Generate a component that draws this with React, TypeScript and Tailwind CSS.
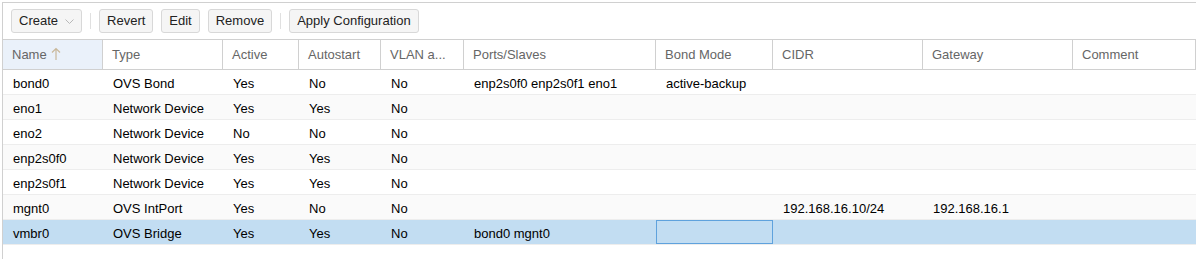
import React from 'react'

const cols = [
  { key: 'name', label: 'Name', w: 'w-[100px]' },
  { key: 'type', label: 'Type', w: 'w-[120px]' },
  { key: 'active', label: 'Active', w: 'w-[76px]' },
  { key: 'autostart', label: 'Autostart', w: 'w-[82px]' },
  { key: 'vlan', label: 'VLAN a...', w: 'w-[83px]' },
  { key: 'ports', label: 'Ports/Slaves', w: 'w-[192px]' },
  { key: 'bond', label: 'Bond Mode', w: 'w-[117px]' },
  { key: 'cidr', label: 'CIDR', w: 'w-[150px]' },
  { key: 'gw', label: 'Gateway', w: 'w-[150px]' },
  { key: 'comment', label: 'Comment', w: 'flex-1' },
]

const rows = [
  ['bond0', 'OVS Bond', 'Yes', 'No', 'No', 'enp2s0f0 enp2s0f1 eno1', 'active-backup', '', '', ''],
  ['eno1', 'Network Device', 'Yes', 'Yes', 'No', '', '', '', '', ''],
  ['eno2', 'Network Device', 'No', 'No', 'No', '', '', '', '', ''],
  ['enp2s0f0', 'Network Device', 'Yes', 'Yes', 'No', '', '', '', '', ''],
  ['enp2s0f1', 'Network Device', 'Yes', 'Yes', 'No', '', '', '', '', ''],
  ['mgnt0', 'OVS IntPort', 'Yes', 'No', 'No', '', '', '192.168.16.10/24', '192.168.16.1', ''],
  ['vmbr0', 'OVS Bridge', 'Yes', 'Yes', 'No', 'bond0 mgnt0', '', '', '', ''],
]

function Btn({ children }: { children: React.ReactNode }) {
  return (
    <button className="h-[24px] px-[7px] flex items-center gap-[6px] bg-[#f5f5f5] border border-[#d8d8d8] rounded-[3px] text-[13px] text-[#222]">
      {children}
    </button>
  )
}

export default function App() {
  return (
    <div className="w-[1196px] h-[259px] bg-white pt-[2px] pl-[2px] font-['Liberation_Sans',Arial,sans-serif] overflow-hidden">
      <div className="border-l border-t border-[#d0d0d0] h-full">
        {/* toolbar */}
        <div className="h-[36px] flex items-start pt-[6px] pl-[8px]">
          <Btn>
            Create
            <svg width="9" height="6" viewBox="0 0 9 6" className="mt-[1px] ml-[1px]">
              <path d="M0.5 0.5 L4.5 4.5 L8.5 0.5" fill="none" stroke="#b8b8b8" strokeWidth="1" />
            </svg>
          </Btn>
          <div className="w-px h-[16px] bg-[#e0e0e0] mx-[8px] mt-[4px]" />
          <div className="flex gap-[8px]">
            <Btn>Revert</Btn>
            <Btn>Edit</Btn>
            <Btn>Remove</Btn>
          </div>
          <div className="w-px h-[16px] bg-[#e0e0e0] mx-[8px] mt-[4px]" />
          <Btn>Apply Configuration</Btn>
        </div>

        {/* header */}
        <div className="flex h-[31px] border-t border-b border-[#d0d0d0] text-[13px] text-[#666]">
          {cols.map((c, i) => (
            <div
              key={c.key}
              className={`${c.w} shrink-0 flex items-center pl-[9px] border-r border-[#d0d0d0] ${i === 0 ? 'bg-[#eaf1fa]' : ''}`}
            >
              {c.label}
              {i === 0 && (
                <svg width="10" height="14" viewBox="0 0 10 14" className="ml-[4px] mt-[-1px]">
                  <path d="M5 13 L5 1.5 M1 5.5 L5 1.5 L9 5.5" fill="none" stroke="#c9b89a" strokeWidth="1.2" />
                </svg>
              )}
            </div>
          ))}
        </div>

        {/* rows */}
        {rows.map((r, ri) => {
          const selected = ri === rows.length - 1
          const bg = selected ? 'bg-[#c2ddf2]' : ri % 2 === 1 ? 'bg-[#fafafa]' : 'bg-white'
          return (
            <div key={ri} className={`flex h-[25px] border-b border-[#ededed] text-[13px] text-black ${bg}`}>
              {cols.map((c, ci) => (
                <div
                  key={c.key}
                  className={`${c.w} shrink-0 flex items-center pl-[10px] pt-[3px] whitespace-nowrap ${
                    selected && ci === 6 ? 'border border-[#5fa2dd]' : ''
                  }`}
                >
                  {r[ci]}
                </div>
              ))}
            </div>
          )
        })}
      </div>
    </div>
  )
}
